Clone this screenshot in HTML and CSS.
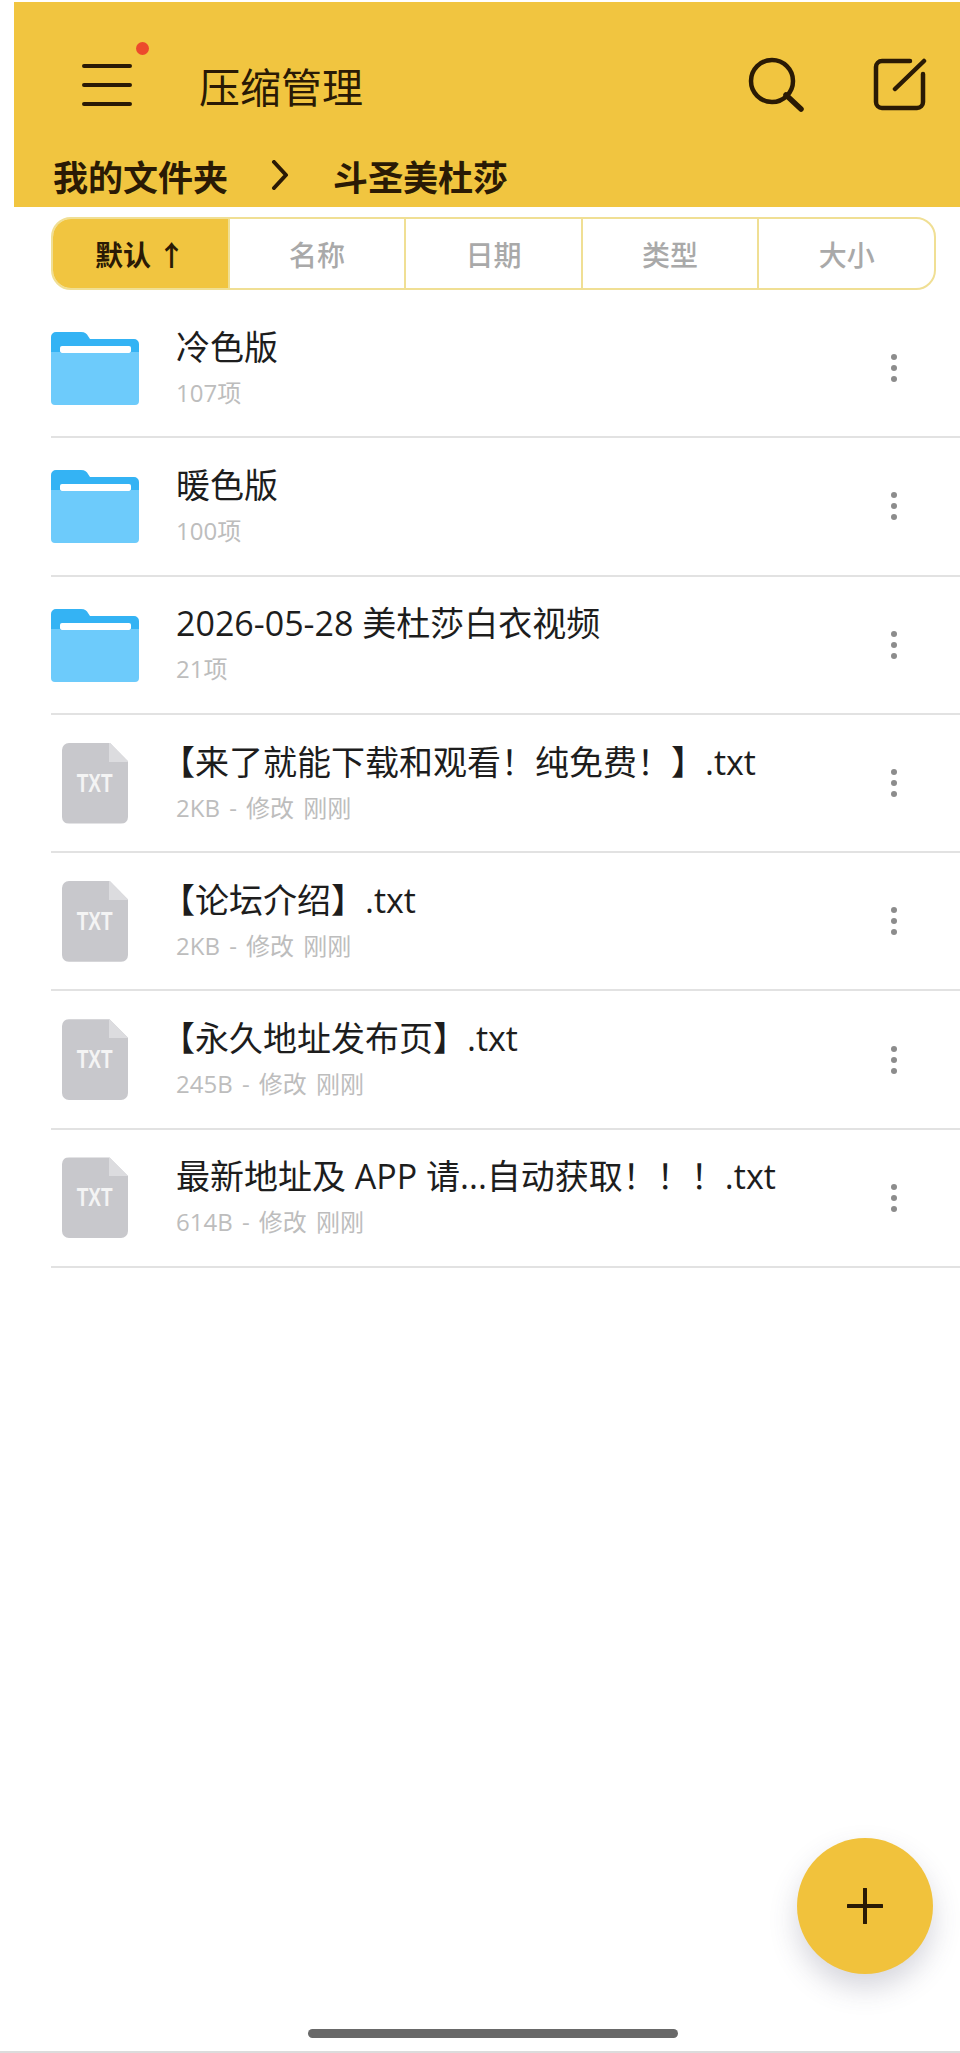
FILE: index.html
```html
<!DOCTYPE html>
<html lang="zh-CN">
<head>
    <meta charset="UTF-8">
    <meta name="viewport" content="width=device-width, initial-scale=1.0">
    <title>压缩管理</title>
    <link rel="stylesheet" href="styles.css">
</head>
<body>
    <div class="page">
        <header class="top">
            <div class="toolbar">
                <button class="menu-btn">
                    <svg width="50" height="42" viewBox="0 0 50 42"><path d="M2 2H48M2 21H48M2 40H48" stroke="#2a1a05" stroke-width="4" stroke-linecap="round"/></svg>
                    <span class="red-dot"></span>
                </button>
                <h1 class="title">压缩管理</h1>
                <svg class="tool-search" width="56" height="56" viewBox="0 0 56 56" fill="none" stroke="#2a1a05" stroke-width="4.5" stroke-linecap="round"><circle cx="24" cy="24" r="21"/><path d="M38 38L53 52" stroke-width="5.5"/></svg>
                <svg class="tool-edit" width="54" height="54" viewBox="0 0 54 54" fill="none" stroke="#2a1a05" stroke-width="4.5" stroke-linecap="round"><path d="M37 3H9a6 6 0 0 0-6 6V44a6 6 0 0 0 6 6H44a6 6 0 0 0 6-6V16"/><path d="M22 31L51 3"/></svg>
            </div>
            <nav class="crumbs">
                <span>我的文件夹</span>
                <svg class="crumb-sep" width="18" height="30" viewBox="0 0 18 30" fill="none" stroke="#2a1a05" stroke-width="4" stroke-linecap="round" stroke-linejoin="round"><path d="M3 2L15 15L3 28"/></svg>
                <span>斗圣美杜莎</span>
            </nav>
        </header>

        <div class="tabs">
            <div class="tab active">默认 ↑</div>
            <div class="tab">名称</div>
            <div class="tab">日期</div>
            <div class="tab">类型</div>
            <div class="tab">大小</div>
        </div>

        <ul class="files">
            <li class="row">
                <svg class="folder" width="88" height="74" viewBox="0 0 88 74"><use href="#folder-icon"/></svg>
                <div class="info"><div class="name">冷色版</div><div class="meta">107项</div></div>
                <span class="more"><i></i><i></i><i></i></span>
            </li>
            <li class="row">
                <svg class="folder" width="88" height="74" viewBox="0 0 88 74"><use href="#folder-icon"/></svg>
                <div class="info"><div class="name">暖色版</div><div class="meta">100项</div></div>
                <span class="more"><i></i><i></i><i></i></span>
            </li>
            <li class="row">
                <svg class="folder" width="88" height="74" viewBox="0 0 88 74"><use href="#folder-icon"/></svg>
                <div class="info"><div class="name">2026-05-28 美杜莎白衣视频</div><div class="meta">21项</div></div>
                <span class="more"><i></i><i></i><i></i></span>
            </li>
            <li class="row">
                <div class="txt-icon"><span>TXT</span></div>
                <div class="info"><div class="name bracket">【来了就能下载和观看！纯免费！】.txt</div><div class="meta">2KB - 修改 刚刚</div></div>
                <span class="more"><i></i><i></i><i></i></span>
            </li>
            <li class="row">
                <div class="txt-icon"><span>TXT</span></div>
                <div class="info"><div class="name bracket">【论坛介绍】.txt</div><div class="meta">2KB - 修改 刚刚</div></div>
                <span class="more"><i></i><i></i><i></i></span>
            </li>
            <li class="row">
                <div class="txt-icon"><span>TXT</span></div>
                <div class="info"><div class="name bracket">【永久地址发布页】.txt</div><div class="meta">245B - 修改 刚刚</div></div>
                <span class="more"><i></i><i></i><i></i></span>
            </li>
            <li class="row">
                <div class="txt-icon"><span>TXT</span></div>
                <div class="info"><div class="name">最新地址及 APP 请...自动获取！！！.txt</div><div class="meta">614B - 修改 刚刚</div></div>
                <span class="more"><i></i><i></i><i></i></span>
            </li>
        </ul>

        <button class="fab">
            <svg width="36" height="36" viewBox="0 0 36 36"><path d="M18 1V35M1 18H35" stroke="#2a1a05" stroke-width="4" stroke-linecap="round"/></svg>
        </button>
        <div class="home-bar"></div>
    </div>

    <svg width="0" height="0" class="defs">
        <defs>
            <g id="folder-icon">
                <path d="M0 6a5 5 0 0 1 5-5H30c4 0 6 2 7 4l2 3H83a5 5 0 0 1 5 5V30H0Z" fill="#34b3f4"/>
                <rect x="9" y="15" width="71" height="7" rx="2" fill="#fff"/>
                <path d="M0 21H9V22H80V21H88V70a4 4 0 0 1-4 4H4a4 4 0 0 1-4-4Z" fill="#6dcbfb"/>
            </g>
        </defs>
    </svg>
</body>
</html>
```

FILE: styles.css
```css
* {
    box-sizing: border-box;
}

body {
    margin: 0;
    padding: 0;
    background-color: #fff;
    font-family: "Noto Sans CJK SC", "Noto Sans", sans-serif;
    color: #1d1d1d;
}

button {
    border: none;
    background: none;
    padding: 0;
}

.page {
    position: relative;
    height: 2053px;
    overflow: hidden;
    padding-top: 2px;
    border-bottom: 2px solid #dcdcdc;
}

.defs {
    position: absolute;
}

.top {
    margin-left: 14px;
    height: 205px;
    background-color: #f1c540;
    color: #2a1a05;
}

.toolbar {
    display: flex;
    align-items: center;
    height: 128px;
    padding-top: 38px;
    padding-left: 68px;
}

.menu-btn {
    position: relative;
    display: flex;
    width: 50px;
    height: 42px;
}

.red-dot {
    position: absolute;
    right: -17px;
    top: -22px;
    width: 13px;
    height: 13px;
    border-radius: 50%;
    background-color: #ec4a2c;
}

.title {
    margin: 0 0 0 67px;
    font-size: 41px;
    font-weight: 400;
    line-height: 1;
    flex: 1;
}

.tool-search {
    margin-right: 69px;
}

.tool-edit {
    margin-right: 33px;
}

.crumbs {
    display: flex;
    align-items: center;
    height: 75px;
    padding-left: 39px;
    padding-top: 15px;
    font-size: 35px;
    font-weight: 700;
    line-height: 1;
}

.crumb-sep {
    margin: 0 44px 0 43px;
}

.tabs {
    display: flex;
    margin: 10px 24px 0 51px;
    height: 73px;
    border: 2px solid #f0df94;
    border-radius: 20px;
    overflow: hidden;
}

.tab {
    flex: 1;
    display: flex;
    align-items: center;
    justify-content: center;
    font-size: 28px;
    font-weight: 500;
    color: #a9a9a9;
    border-left: 2px solid #f0df94;
}

.tab:first-child {
    border-left: none;
}

.tab.active {
    background-color: #f1c540;
    color: #2a1a05;
    font-weight: 700;
}

.files {
    list-style: none;
    margin: 10px 0 0 51px;
    padding: 0;
}

.row {
    display: flex;
    align-items: center;
    height: 138.3px;
    border-bottom: 2px solid #e2e2e2;
}

.folder {
    flex: none;
    margin-right: 37px;
}

.txt-icon {
    flex: none;
    position: relative;
    width: 66px;
    height: 81px;
    margin: 0 48px 0 11px;
    background-color: #c8c8cc;
    border-radius: 7px;
    clip-path: polygon(0 0, 72% 0, 100% 23%, 100% 100%, 0 100%);
    display: flex;
    align-items: center;
    justify-content: center;
    color: #f4f4f4;
    font-family: "Liberation Sans", sans-serif;
    font-size: 25px;
    font-weight: 700;
}

.txt-icon span {
    transform: scaleX(0.76);
}

.txt-icon::after {
    content: "";
    position: absolute;
    top: 0;
    right: 0;
    width: 19px;
    height: 19px;
    background-color: #dcdcdf;
}

.info {
    flex: 1;
    min-width: 0;
    padding-bottom: 4px;
    font-family: "Open Sans", "Noto Sans CJK SC", sans-serif;
}

.name {
    font-size: 34px;
    line-height: 44px;
    white-space: nowrap;
}

.name.bracket {
    margin-left: -15px;
}

.meta {
    margin-top: 9px;
    font-size: 24px;
    line-height: 30px;
    word-spacing: 3px;
    color: #bdbdbd;
}

.more {
    flex: none;
    display: flex;
    flex-direction: column;
    gap: 5px;
    margin-right: 63px;
}

.more i {
    display: block;
    width: 6px;
    height: 6px;
    border-radius: 50%;
    background-color: #8c8c8c;
}

.fab {
    position: absolute;
    left: 797px;
    top: 1838px;
    width: 136px;
    height: 136px;
    border-radius: 50%;
    background-color: #f1c23c;
    display: flex;
    align-items: center;
    justify-content: center;
    box-shadow: 0 14px 28px rgba(70, 70, 100, 0.22);
}

.home-bar {
    position: absolute;
    left: 308px;
    top: 2029px;
    width: 370px;
    height: 9px;
    border-radius: 5px;
    background-color: #696969;
}
```
